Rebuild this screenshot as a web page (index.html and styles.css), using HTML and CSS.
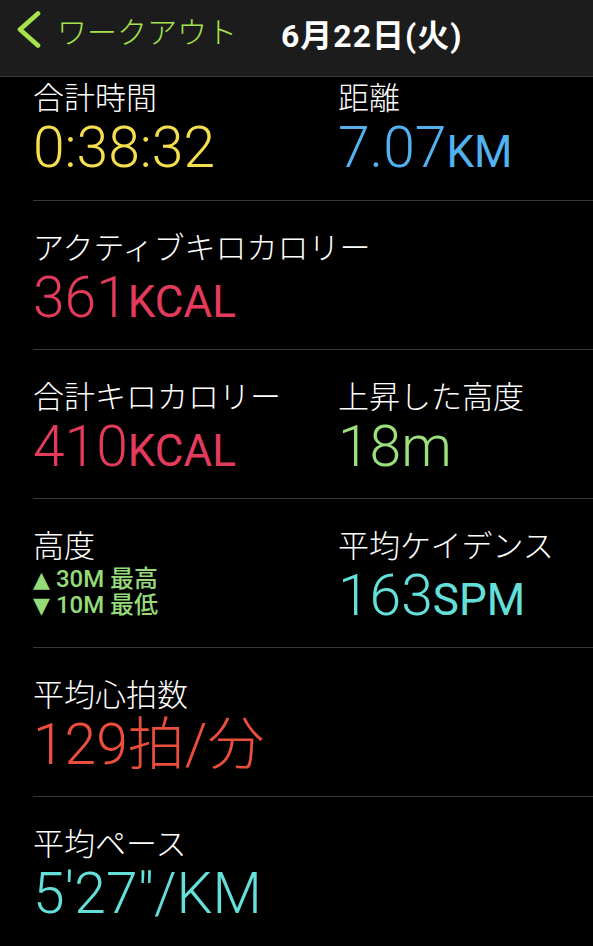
FILE: index.html
```html
<!DOCTYPE html>
<html lang="ja">
<head>
  <meta charset="UTF-8">
  <title>ワークアウト 6月22日(火)</title>
  <link rel="stylesheet" href="styles.css">
</head>
<body>

  <header class="navbar">
    <a class="back" href="#">
      <svg class="chevron" width="26" height="40" viewBox="0 0 26 40">
        <polyline points="21,3.5 3,19.5 21,35.5" fill="none" stroke="#a6e34b" stroke-width="4.6" stroke-linecap="round" stroke-linejoin="round"/>
      </svg>
      <span>ワークアウト</span>
    </a>
    <div class="title">6月22日(火)</div>
  </header>

  <main class="stats">
    <div class="row row-cut">
      <div class="stat">
        <div class="label">合計時間</div>
        <div class="value yellow">0:38:32</div>
      </div>
      <div class="stat">
        <div class="label">距離</div>
        <div class="value blue">7.07<span class="unit">KM</span></div>
      </div>
    </div>

    <div class="row">
      <div class="stat wide">
        <div class="label">アクティブキロカロリー</div>
        <div class="value red">361<span class="unit">KCAL</span></div>
      </div>
    </div>

    <div class="row">
      <div class="stat">
        <div class="label">合計キロカロリー</div>
        <div class="value red">410<span class="unit">KCAL</span></div>
      </div>
      <div class="stat">
        <div class="label">上昇した高度</div>
        <div class="value green">18m</div>
      </div>
    </div>

    <div class="row">
      <div class="stat">
        <div class="label">高度</div>
        <div class="elev">
          <div><span class="arrow">▲</span> 30M 最高</div>
          <div><span class="arrow">▼</span> 10M 最低</div>
        </div>
      </div>
      <div class="stat">
        <div class="label">平均ケイデンス</div>
        <div class="value teal">163<span class="unit">SPM</span></div>
      </div>
    </div>

    <div class="row">
      <div class="stat wide">
        <div class="label">平均心拍数</div>
        <div class="value orange">129拍/分</div>
      </div>
    </div>

    <div class="row last">
      <div class="stat wide">
        <div class="label">平均ペース</div>
        <div class="value teal">5'27"/KM</div>
      </div>
    </div>
  </main>

</body>
</html>
```

FILE: styles.css
```css
body {
  margin: 0;
  background: #000;
  color: #fff;
  font-family: "Noto Sans CJK JP", sans-serif;
  overflow: hidden;
}
.navbar {
  height: 76px;
  background: #1c1c1d;
  border-bottom: 1px solid #3a3a3c;
  display: flex;
  align-items: center;
  gap: 44px;
  padding-left: 17px;
}
.back {
  display: flex;
  align-items: center;
  gap: 14px;
  color: #a6e34b;
  text-decoration: none;
  font-size: 30px;
  font-weight: 300;
  margin-top: -16px;
}
.title {
  font-family: Roboto, "Noto Sans CJK JP", sans-serif;
  font-size: 32px;
  font-weight: 700;
  letter-spacing: 1px;
  margin-top: -10px;
}
.stats {
  padding-left: 33px;
}
.row {
  display: grid;
  grid-template-columns: 305px 1fr;
  padding: 27px 0 21px;
  border-bottom: 1px solid #38383a;
}
.row-cut {
  padding-top: 1px;
  padding-bottom: 22px;
}
.row.last {
  border-bottom: none;
}
.stat.wide {
  grid-column: 1 / 3;
}
.label {
  height: 36px;
  font-size: 31px;
  font-weight: 300;
  line-height: 36px;
  white-space: nowrap;
}
.value {
  height: 60px;
  font-family: Roboto, "Noto Sans CJK JP", sans-serif;
  font-size: 57px;
  font-weight: 300;
  line-height: 60px;
  margin-top: 4px;
  white-space: nowrap;
}
.unit {
  font-size: 44px;
  font-weight: 400;
  line-height: 1;
}
.elev {
  font-family: Roboto, "Noto Sans CJK JP", sans-serif;
  font-size: 24px;
  font-weight: 500;
  line-height: 26px;
  margin-top: 4px;
  color: #95db7a;
}
.arrow {
  font-family: "DejaVu Sans", sans-serif;
  font-size: 22px;
  line-height: 1;
}
.yellow { color: #f5df4e; }
.blue { color: #52b2f0; }
.red { color: #e43b5c; }
.green { color: #9be07c; }
.teal { color: #64e0da; }
.orange { color: #eb4f3c; }
```
